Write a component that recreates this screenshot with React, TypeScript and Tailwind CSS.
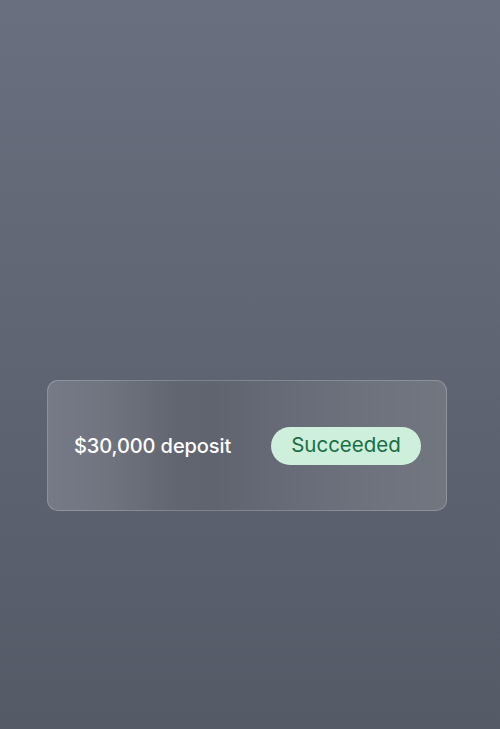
export default function App() {
  return (
    <div
      className="flex h-[729px] w-[500px] items-center bg-gradient-to-b from-[#6a6f7f] to-[#555a67] pl-[47px]"
      style={{ fontFamily: "Inter, 'Liberation Sans', sans-serif" }}
    >
      <div className="mt-[162px] flex h-[131px] w-[400px] items-center justify-between rounded-[11px] border border-white/20 bg-[linear-gradient(90deg,#767a87_0%,#70747f_15%,#61656f_33%,#60646f_42%,#676b77_60%,#6e727d_80%,#72767f_100%)] pl-[26px] pr-[25px]">
        <span className="text-[20px] font-medium tracking-[-0.1px] text-white">
          $30,000 deposit
        </span>
        <span className="flex h-[38px] w-[150px] items-center justify-center rounded-full bg-[#cdefdc] text-[20.5px] text-[#1b6e43]">
          Succeeded
        </span>
      </div>
    </div>
  );
}
